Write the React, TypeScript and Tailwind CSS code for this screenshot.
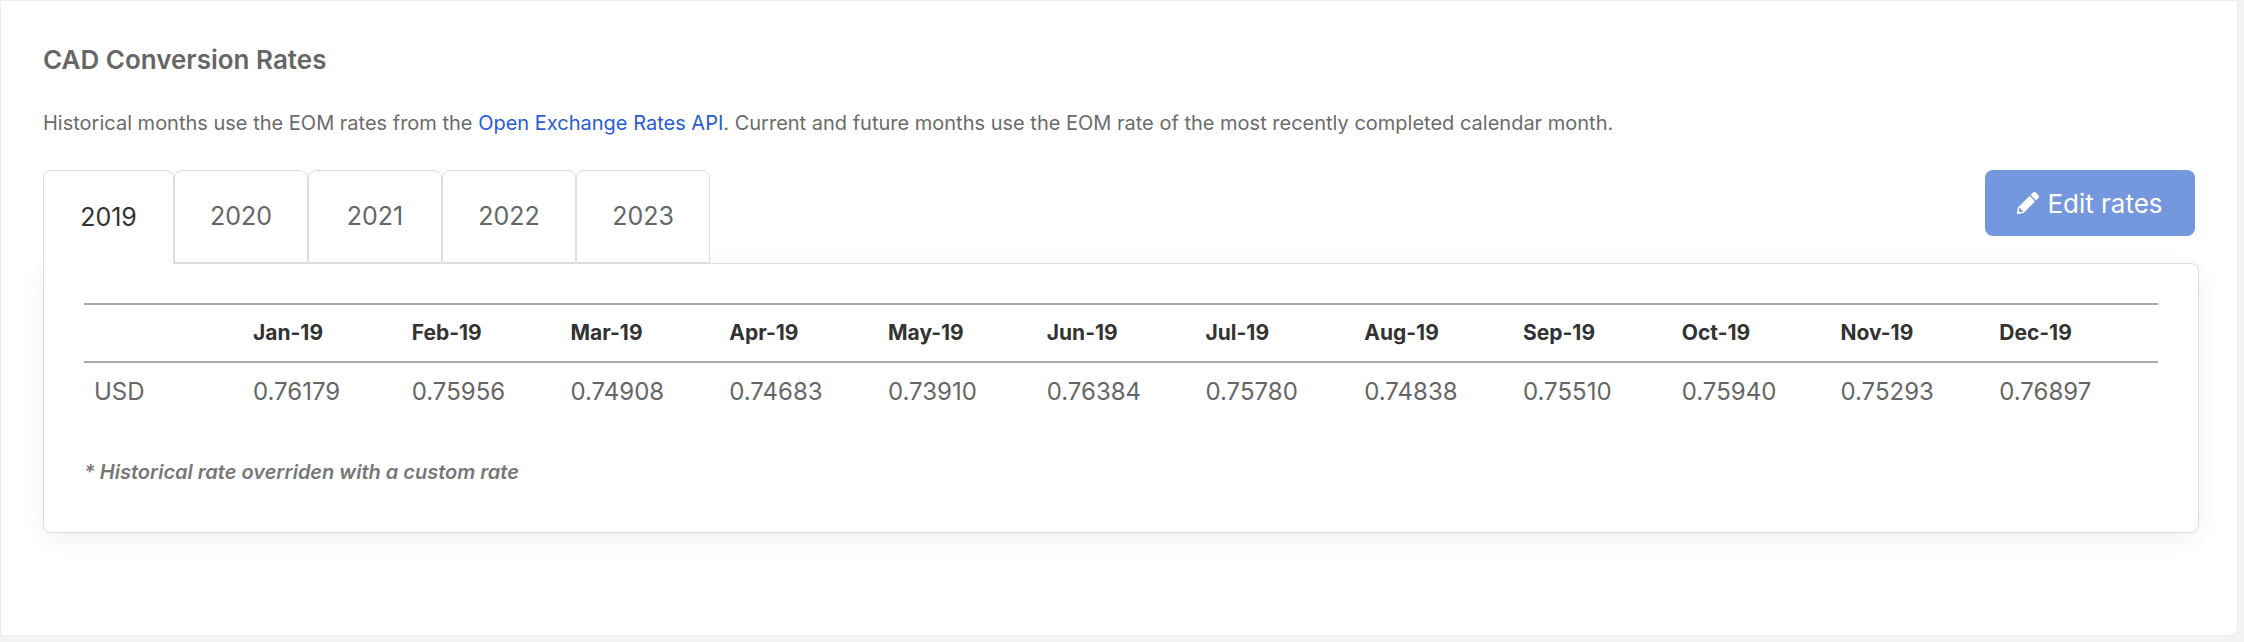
const months = ["Jan-19", "Feb-19", "Mar-19", "Apr-19", "May-19", "Jun-19", "Jul-19", "Aug-19", "Sep-19", "Oct-19", "Nov-19", "Dec-19"];
const rates = ["0.76179", "0.75956", "0.74908", "0.74683", "0.73910", "0.76384", "0.75780", "0.74838", "0.75510", "0.75940", "0.75293", "0.76897"];
const years = ["2019", "2020", "2021", "2022", "2023"];

export default function App() {
  return (
    <div className="h-[642px] w-[2244px] bg-[#f3f3f4] font-[family-name:Inter,sans-serif]">
      <div className="h-[636px] w-[2238px] rounded-br-[8px] border border-[#ececec] bg-white px-[42px] pt-[37px]">
        <h2 className="text-[26px] font-semibold leading-[44px] text-[#666]">CAD Conversion Rates</h2>
        <p className="mt-[27px] text-[20px] leading-[28px] text-[#6b6b6b]">
          Historical months use the EOM rates from the{" "}
          <a className="text-[#2a5bd7]">Open Exchange Rates API</a>. Current and future months use the EOM rate of the
          most recently completed calendar month.
        </p>

        <div className="mt-[33px] flex items-start justify-between">
          <div className="flex">
            {years.map((y, i) => (
              <div
                key={y}
                className={
                  i === 0
                    ? "relative z-10 -mb-px flex h-[94px] w-[131px] items-center justify-center rounded-t-[8px] border border-b-0 border-[#ddd] bg-white text-[25px] text-[#333]"
                    : "flex h-[93px] w-[134px] items-center justify-center rounded-t-[8px] border border-[#ddd] bg-white text-[25px] text-[#666]"
                }
              >
                {y}
              </div>
            ))}
          </div>
          <button className="flex h-[66px] w-[210px] items-center justify-center gap-[8px] rounded-[8px] bg-[#7597dd] text-[26px] text-white">
            <svg width="22" height="22" viewBox="0 0 512 512" fill="white">
              <path d="M497.9 142.1l-46.1 46.1c-4.7 4.7-12.3 4.7-17 0l-111-111c-4.7-4.7-4.7-12.3 0-17l46.1-46.1c18.7-18.7 49.1-18.7 67.9 0l60.1 60.1c18.8 18.7 18.8 49.1 0 67.9zM284.2 99.8L21.6 362.4.4 483.9c-2.9 16.4 11.4 30.6 27.8 27.8l121.5-21.3 262.6-262.6c4.7-4.7 4.7-12.3 0-17l-111-111c-4.8-4.7-12.4-4.7-17.1 0zM88 424h48v36.3l-64.5 11.3-31.1-31.1L51.7 376H88v48z" />
            </svg>
            Edit rates
          </button>
        </div>

        <div className="h-[270px] w-[2156px] rounded-b-[8px] rounded-tr-[8px] border border-[#ddd] bg-white px-[40px] pt-[39px] shadow-[0_6px_24px_rgba(0,0,0,0.06)]">
          <div className="grid grid-cols-[169px_repeat(12,1fr)] border-y-2 border-[#aaa]">
            <div />
            {months.map((m) => (
              <div key={m} className="py-[14px] text-[21px] font-bold leading-[28px] text-[#333]">
                {m}
              </div>
            ))}
          </div>
          <div className="grid grid-cols-[169px_repeat(12,1fr)]">
            <div className="pl-[10px] py-[14px] text-[24px] leading-[30px] text-[#666]">USD</div>
            {rates.map((r) => (
              <div key={r} className="py-[14px] text-[24px] leading-[30px] text-[#666]">
                {r}
              </div>
            ))}
          </div>
          <p className="mt-[36px] text-[20px] font-semibold italic text-[#777]">* Historical rate overriden with a custom rate</p>
        </div>
      </div>
    </div>
  );
}
